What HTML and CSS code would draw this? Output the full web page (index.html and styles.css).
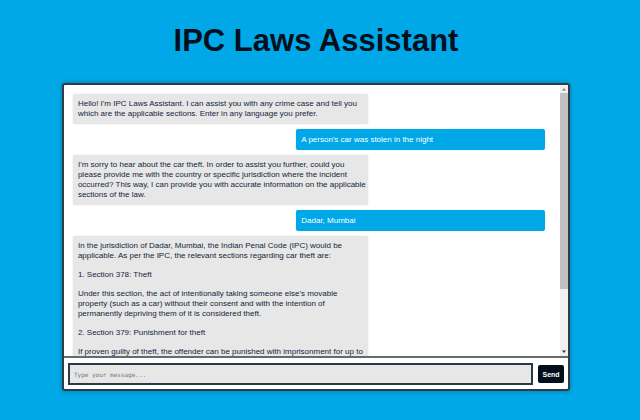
FILE: index.html
```html
<!DOCTYPE html>
<html lang="en">
<head>
<meta charset="utf-8">
<title>IPC Laws Assistant</title>
<link rel="stylesheet" href="styles.css">
</head>
<body>
<h1 class="title">IPC Laws Assistant</h1>
<main class="chat">
  <div class="chat-view">
    <div class="messages">
      <div class="message bot"><p>Hello! I'm IPC Laws Assistant. I can assist you with any crime case and tell you which are the applicable sections. Enter in any language you prefer.</p></div>
      <div class="message user"><p>A person's car was stolen in the night</p></div>
      <div class="message bot"><p>I'm sorry to hear about the car theft. In order to assist you further, could you please provide me with the country or specific jurisdiction where the incident occurred? This way, I can provide you with accurate information on the applicable sections of the law.</p></div>
      <div class="message user"><p>Dadar, Mumbai</p></div>
      <div class="message bot">
        <p>In the jurisdiction of Dadar, Mumbai, the Indian Penal Code (IPC) would be applicable. As per the IPC, the relevant sections regarding car theft are:</p>
        <p>1. Section 378: Theft</p>
        <p>Under this section, the act of intentionally taking someone else's movable property (such as a car) without their consent and with the intention of permanently depriving them of it is considered theft.</p>
        <p>2. Section 379: Punishment for theft</p>
        <p>If proven guilty of theft, the offender can be punished with imprisonment for up to</p>
      </div>
    </div>
    <div class="scrollbar" aria-hidden="true">
      <svg class="arrow" viewBox="0 0 8 8"><path d="M2 5.5 4 3.2 6 5.5z" fill="#777"/></svg>
      <div class="track"><div class="thumb"></div></div>
      <svg class="arrow" viewBox="0 0 8 8"><path d="M2 2.5 4 5 6 2.5z" fill="#333"/></svg>
    </div>
  </div>
  <form class="composer">
    <input class="field" type="text" placeholder="Type your message..." aria-label="Type your message">
    <button class="send" type="button">Send</button>
  </form>
</main>
</body>
</html>
```
FILE: styles.css
```css
* {
  box-sizing: border-box;
}

body {
  display: flex;
  flex-direction: column;
  align-items: center;
  height: 100vh;
  margin: 0;
  padding: 22px 0 29px;
  background: #00a8e8;
  color: #00171f;
  font-family: "Liberation Sans", Arial, sans-serif;
}

.title {
  margin: 0 8px 23px 0;
  font-size: 31px;
  line-height: 38px;
  color: #030f1c;
}

.chat {
  display: flex;
  flex-direction: column;
  flex: 1;
  min-height: 0;
  width: 79.4%;
  margin-right: 8px;
  border: 2px solid #2f3b46;
  border-radius: 3px;
  background: #fff;
  box-shadow: 0 0 5px rgba(0, 0, 0, 0.3);
}

.chat-view {
  display: flex;
  flex: 1;
  min-height: 0;
}

.messages {
  display: flex;
  flex-direction: column;
  flex: 1;
  gap: 5px;
  padding: 9px 15px 0 9px;
  overflow: hidden;
}

.message {
  flex: none;
  padding: 5px 0 5px 5px;
  border-radius: 2px;
  font-size: 8px;
  line-height: 10px;
  box-shadow: 0 0 2px rgba(0, 0, 0, 0.12);
}

.message p {
  margin: 0;
}

.message p + p {
  margin-top: 9px;
}

.bot {
  align-self: flex-start;
  width: 62.5%;
  background: #e7e7e7;
  color: #14253a;
}

.user {
  align-self: flex-end;
  width: 52.7%;
  background: #00a8e8;
  color: #fff;
  line-height: 11px;
}

.scrollbar {
  display: flex;
  flex-direction: column;
  width: 8px;
  background: #f0f0f0;
}

.arrow {
  width: 8px;
  height: 8px;
}

.track {
  flex: 1;
}

.thumb {
  height: 77%;
  background: #c1c1c1;
}

.composer {
  display: flex;
  align-items: center;
  gap: 5px;
  padding: 5px 4px 4px;
  border-top: 2px solid #666b70;
}

.field {
  flex: 1;
  min-width: 0;
  height: 22px;
  padding: 0 4px;
  border: 2px solid #2b3a49;
  border-radius: 0;
  background: #e7e7e7;
  color: #14253a;
  font-family: "DejaVu Sans Mono", monospace;
  font-size: 6px;
}

.field::placeholder {
  color: #757575;
  opacity: 1;
}

.send {
  width: 26px;
  height: 18px;
  padding: 0;
  border: 0;
  border-radius: 2px;
  background: #030f1c;
  color: #fff;
  font-family: "Liberation Sans", Arial, sans-serif;
  font-size: 7px;
  font-weight: 600;
}
```
